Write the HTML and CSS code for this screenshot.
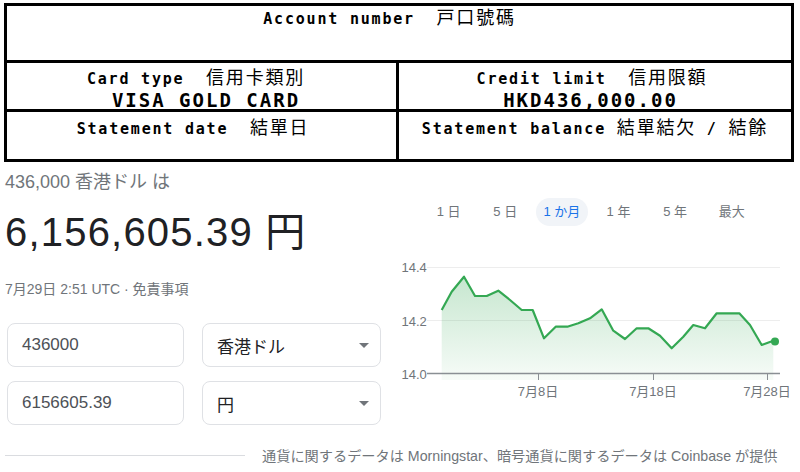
FILE: index.html
```html
<!DOCTYPE html>
<html lang="ja">
<head>
<meta charset="utf-8">
<title>Statement</title>
<link rel="stylesheet" href="styles.css">
</head>
<body>
<div class="sheet">
  <div class="row row-1">
    <div class="cell cell-full"><div class="ln ln-acct">Account number  <span class="cjk">戸口號碼</span></div></div>
  </div>
  <div class="row row-2">
    <div class="cell cell-left">
      <div class="ln ln-card">Card type  <span class="cjk">信用卡類別</span></div>
      <div class="val val-card">VISA GOLD CARD</div>
    </div>
    <div class="cell cell-right">
      <div class="ln ln-limit">Credit limit  <span class="cjk">信用限額</span></div>
      <div class="val val-limit">HKD436,000.00</div>
    </div>
  </div>
  <div class="row row-3">
    <div class="cell cell-left"><div class="ln ln-date">Statement date  <span class="cjk">結單日</span></div></div>
    <div class="cell cell-right"><div class="ln ln-bal">Statement balance <span class="cjk">結單結欠</span> / <span class="cjk">結餘</span></div></div>
  </div>
</div>

<div class="main">
  <div class="left">
    <div class="from">436,000 香港ドル は</div>
    <div class="result">6,156,605.39 円</div>
    <div class="stamp">7月29日 2:51 UTC · 免責事項</div>
    <div class="inputs">
      <div class="box"><span class="num">436000</span></div>
      <div class="box select"><span>香港ドル</span><span class="arrow"></span></div>
      <div class="box"><span class="num">6156605.39</span></div>
      <div class="box select"><span>円</span><span class="arrow"></span></div>
    </div>
  </div>
  <div class="right">
    <div class="tabs">
      <div class="tab">1 日</div>
      <div class="tab">5 日</div>
      <div class="tab active">1 か月</div>
      <div class="tab">1 年</div>
      <div class="tab">5 年</div>
      <div class="tab">最大</div>
    </div>
    <svg class="chart" width="405" height="150" viewBox="395 250 405 150">
      <defs>
        <linearGradient id="g" x1="0" y1="0" x2="0" y2="1">
          <stop offset="0" stop-color="#34a853" stop-opacity="0.28"/>
          <stop offset="1" stop-color="#34a853" stop-opacity="0.04"/>
        </linearGradient>
      </defs>
      <line x1="427" y1="267.5" x2="780" y2="267.5" stroke="#ededed" stroke-width="1"/>
      <line x1="427" y1="320.5" x2="780" y2="320.5" stroke="#ededed" stroke-width="1"/>
      <polygon fill="url(#g)" points="441.7,310 451.7,291.7 464,276.7 475,296 486.7,296 498.3,290.7 510,300 521.7,310 532.7,310 544,338.3 555.7,326.7 567.3,326.7 578.3,323.3 590,318.3 601.7,309.3 613.3,330.7 625,339 636.7,328.3 648.3,328.3 660,335.7 671.7,348.3 683.3,336.7 693.3,325 705,328.3 716.7,313.3 728.3,313.3 739.3,313.3 750,325 761.7,345 773.3,340.7 773.3,380 441.7,380"/>
      <line x1="427" y1="373.5" x2="780" y2="373.5" stroke="#8a8f94" stroke-width="1.4"/>
      <line x1="538.5" y1="373" x2="538.5" y2="380" stroke="#8a8f94" stroke-width="1"/>
      <line x1="653.5" y1="373" x2="653.5" y2="380" stroke="#8a8f94" stroke-width="1"/>
      <line x1="767.5" y1="373" x2="767.5" y2="380" stroke="#8a8f94" stroke-width="1"/>
      <polyline fill="none" stroke="#34a853" stroke-width="2.2" stroke-linejoin="round" points="441.7,310 451.7,291.7 464,276.7 475,296 486.7,296 498.3,290.7 510,300 521.7,310 532.7,310 544,338.3 555.7,326.7 567.3,326.7 578.3,323.3 590,318.3 601.7,309.3 613.3,330.7 625,339 636.7,328.3 648.3,328.3 660,335.7 671.7,348.3 683.3,336.7 693.3,325 705,328.3 716.7,313.3 728.3,313.3 739.3,313.3 750,325 761.7,345 773.3,340.7"/>
      <circle cx="775" cy="341.5" r="4" fill="#34a853"/>
      <text class="ax" x="401.5" y="272">14.4</text>
      <text class="ax" x="401.5" y="326">14.2</text>
      <text class="ax" x="401.5" y="379">14.0</text>
      <text class="ax" x="538" y="396" text-anchor="middle">7月8日</text>
      <text class="ax" x="653" y="396" text-anchor="middle">7月18日</text>
      <text class="ax" x="767" y="396" text-anchor="middle">7月28日</text>
    </svg>
  </div>
</div>

<div class="footer">
  <div class="rule"></div>
  <div class="credit">通貨に関するデータは Morningstar、暗号通貨に関するデータは Coinbase が提供</div>
</div>
</body>
</html>
```
FILE: styles.css
```css
html, body {
  margin: 0;
  padding: 0;
  background: #fff;
}
body {
  width: 800px;
  height: 472px;
  overflow: hidden;
  font-family: "Liberation Sans", "Noto Sans CJK JP", sans-serif;
}

/* ---------- scanned statement table ---------- */
.sheet {
  margin: 3px 0 0 4px;
  width: 784px;
  border: 3px solid #000;
  color: #000;
  font-family: "DejaVu Sans Mono", "Noto Sans CJK TC", monospace;
  font-weight: bold;
  font-size: 15px;
  letter-spacing: 1.8px;
  line-height: 21px;
}
.ln, .val { white-space: pre; }
.row {
  display: flex;
  border-bottom: 3px solid #000;
}
.row-1 { height: 54px; }
.row-2 { height: 46px; }
.row-3 { height: 47px; border-bottom: 0; }
.cell {
  text-align: center;
}
.cell-full { flex: 1; }
.cell-left {
  width: 389px;
  border-right: 3px solid #000;
}
.cell-right { flex: 1; }
.cjk {
  font-family: "Noto Sans CJK TC", sans-serif;
  font-weight: normal;
  font-size: 18px;
}
.val {
  font-size: 19px;
  letter-spacing: 2px;
  line-height: 20px;
}
.ln-acct { padding-right: 19px; }
.row-2 .cell { padding-top: 3px; }
.row-3 .cell { padding-top: 4px; }
.ln-card { padding-right: 11px; }
.val-card { padding-left: 9px; }
.ln-limit { padding-right: 6px; }
.val-limit { padding-right: 9px; }
.ln-date { padding-right: 17px; }

/* ---------- converter ---------- */
.main {
  display: flex;
}
.left {
  width: 390px;
  padding-left: 5px;
}
.from {
  margin-top: 9px;
  font-size: 18px;
  line-height: 22px;
  color: #70757a;
}
.result {
  margin-top: 15px;
  font-size: 40px;
  line-height: 48px;
  letter-spacing: 1.2px;
  color: #202124;
}
.stamp {
  margin-top: 25px;
  font-size: 14px;
  line-height: 16px;
  color: #70757a;
}
.inputs {
  margin: 26px 0 0 2px;
  display: grid;
  grid-template-columns: 177px 179px;
  grid-auto-rows: 44px;
  column-gap: 18px;
  row-gap: 14px;
}
.box {
  box-sizing: border-box;
  border: 1px solid #dfe1e5;
  border-radius: 8px;
  display: flex;
  align-items: center;
  padding: 0 11px 0 14px;
  font-size: 17px;
  color: #202124;
}
.num { color: #4d5156; }
.select { justify-content: space-between; }
.arrow {
  width: 0;
  height: 0;
  border-left: 5px solid transparent;
  border-right: 5px solid transparent;
  border-top: 5px solid #70757a;
}

.right {
  flex: 1;
}
.tabs {
  display: flex;
  gap: 4.6px;
  margin: 36px 0 0 27.7px;
}
.tab {
  width: 52px;
  height: 28px;
  line-height: 28px;
  border-radius: 14px;
  text-align: center;
  font-size: 13px;
  color: #70757a;
}
.tab.active {
  background: #f1f4f8;
  color: #1a73e8;
}
.chart {
  display: block;
  margin-top: 24px;
}
.ax {
  font-family: "Liberation Sans", "Noto Sans CJK JP", sans-serif;
  font-size: 13px;
  fill: #70757a;
}

.footer {
  display: flex;
  align-items: center;
  margin-top: 20px;
  height: 20px;
}
.rule {
  margin-left: 5px;
  width: 240px;
  border-top: 1px solid #dadce0;
}
.credit {
  margin-left: 17px;
  font-size: 14.2px;
  color: #70757a;
  white-space: nowrap;
}
```
